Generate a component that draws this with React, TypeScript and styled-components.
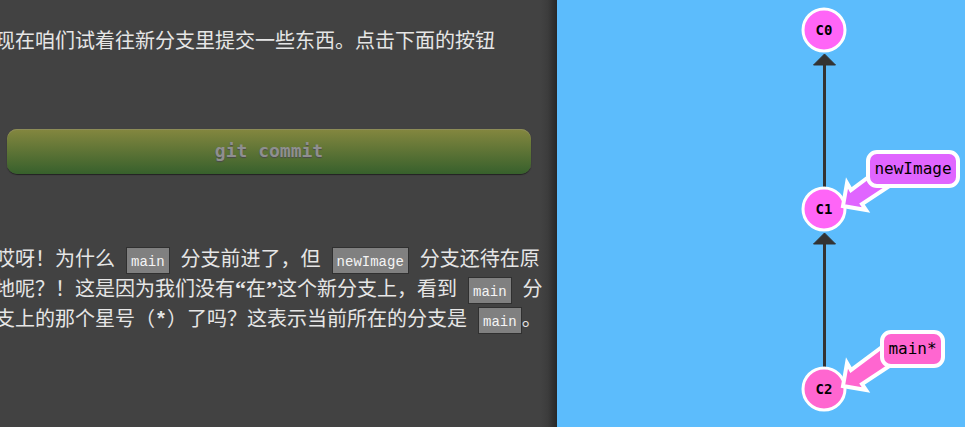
import React from "react";
import styled, { createGlobalStyle } from "styled-components";

const GlobalStyle = createGlobalStyle`
  *, *::before, *::after { box-sizing: border-box; }
  body { margin: 0; background: #5cbcfc; }
`;

const Page = styled.main`
  display: grid;
  grid-template-columns: minmax(0, 557fr) minmax(0, 408fr);
  min-height: 100vh;
  overflow: hidden;
`;

const Lesson = styled.section`
  display: flex;
  flex-direction: column;
  padding: 26px 12px 0 0;
  background: linear-gradient(to left, #282828, #303030 4px, #3c3c3c 9px, #424242 16px);
  overflow: hidden;
`;

const Paragraph = styled.p`
  margin: 0 0 0 -5px;
  color: #e6e6e6;
  font-family: "Liberation Serif", "Noto Sans CJK SC", serif;
  font-size: 20px;
  line-height: 30px;
  text-spacing-trim: space-all;
  text-autospace: no-autospace;
`;

const Quote = styled.b`
  font-size: 22px;
  line-height: 1;
`;

const Star = styled.b`
  font-family: "Liberation Mono", monospace;
  font-size: 20px;
  line-height: 1;
`;

const Chip = styled.code<{ $flush?: boolean }>`
  margin: 0 ${(p) => (p.$flush ? 0 : 6)}px 0 6px;
  padding: 6px 4px 3px;
  border: 1px solid #303030;
  background: #808080;
  color: #f4f4f4;
  font-family: "Liberation Mono", monospace;
  font-size: 14px;
  line-height: 1;
  white-space: nowrap;
`;

const CommandButton = styled.button`
  height: 45px;
  margin: 73px 14px 70px 7px;
  padding: 0 0 2px;
  border: 0;
  border-radius: 10px;
  background: linear-gradient(#84873f, #37602c);
  box-shadow: 0 1px 1px #222, inset 0 1px 0 #8c8c58;
  color: #8f8f8f;
  font-family: "DejaVu Sans Mono", monospace;
  font-size: 18px;
  font-weight: 700;
  text-shadow: 0 1px 1px #4a4a4a;
`;

const Tree = styled.section`
  background: #5cbcfc;
`;

const Drawing = styled.svg`
  display: block;
  width: 100%;
`;

const CommitText = styled.text`
  font: 700 14px "DejaVu Sans Mono", monospace;
  text-anchor: middle;
`;

const BranchText = styled.text`
  font: 16px "DejaVu Sans Mono", monospace;
  text-anchor: middle;
`;

function Edge({ from, to }: { from: number; to: number }) {
  return (
    <g fill="#333" stroke="#333">
      <path d={`M267.5 ${from}V${to + 10}`} strokeWidth="3" />
      <path d={`M267.5 ${to}L278.5 ${to + 11}H256.5Z`} strokeWidth="1" strokeLinejoin="round" />
    </g>
  );
}

function Commit({ y, fill, id }: { y: number; fill: string; id: string }) {
  return (
    <g>
      <circle cx="267" cy={y} r="21" fill={fill} stroke="#fff" strokeWidth="3" />
      <CommitText x="267" y={y + 5}>{id}</CommitText>
    </g>
  );
}

interface BranchProps {
  y: number;
  x: number;
  width: number;
  height: number;
  fill: string;
  name: string;
}

function Branch({ y, x, width, height, fill, name }: BranchProps) {
  return (
    <g fill={fill} stroke="#fff">
      <path
        d={`M286 ${y - 2}L290 ${y - 25}L294 ${y - 18}L325 ${y - 41}L337 ${y - 25}L305 ${y - 4}L309 ${y + 2}Z`}
        strokeWidth="4"
      />
      <rect x={x} y={y - 56} width={width} height={height} rx="9" strokeWidth="4" />
      <BranchText x={x + width / 2} y={y - 34} fill="#000" stroke="none">{name}</BranchText>
    </g>
  );
}

export default function App() {
  return (
    <>
      <GlobalStyle />
      <Page lang="zh-CN">
        <Lesson>
          <Paragraph>现在咱们试着往新分支里提交一些东西。点击下面的按钮</Paragraph>
          <CommandButton type="button">git commit</CommandButton>
          <Paragraph>
            哎呀！为什么 <Chip>main</Chip> 分支前进了，但 <Chip>newImage</Chip>{" "}
            分支还待在原地呢？！这是因为我们没有<Quote>“</Quote>在<Quote>”</Quote>这个新分支上，看到{" "}
            <Chip>main</Chip> 分支上的那个星号（<Star>*</Star>）了吗？这表示当前所在的分支是{" "}
            <Chip $flush>main</Chip>。
          </Paragraph>
        </Lesson>
        <Tree aria-label="commit tree">
          <Drawing viewBox="0 0 408 427">
            <Edge from={188} to={54} />
            <Edge from={367} to={233} />
            <Commit y={30} fill="#ff65f7" id="C0" />
            <Commit y={209} fill="#ff65f7" id="C1" />
            <Commit y={389} fill="#ff66d0" id="C2" />
            <Branch y={208} x={311} width={90} height={34} fill="#e065ff" name="newImage" />
            <Branch y={388} x={325} width={61} height={34} fill="#ff66d0" name="main*" />
          </Drawing>
        </Tree>
      </Page>
    </>
  );
}
